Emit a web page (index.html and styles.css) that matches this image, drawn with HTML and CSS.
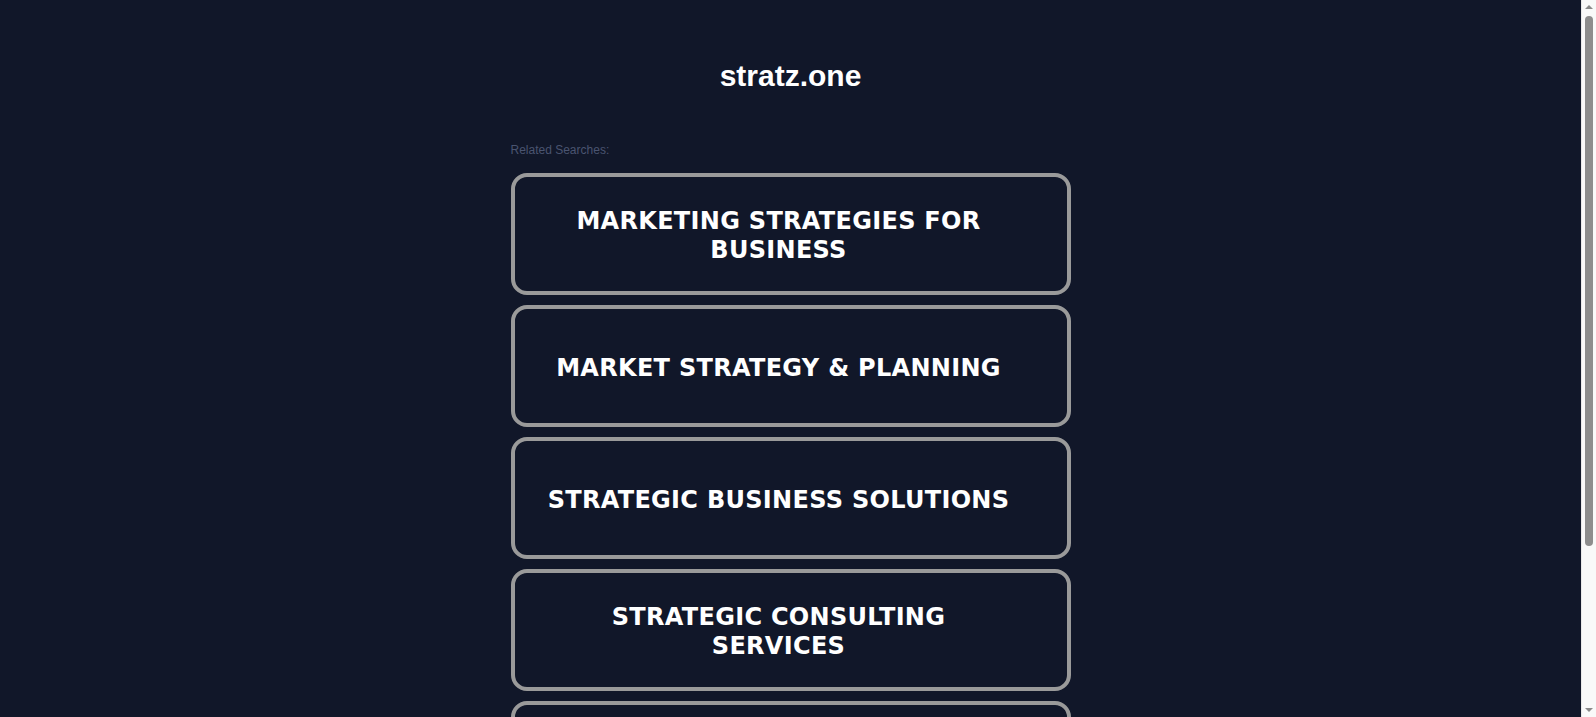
FILE: index.html
```html
<!DOCTYPE html>
<html lang="en">
<head>
<meta charset="utf-8">
<title>stratz.one</title>
<link rel="stylesheet" href="styles.css">
</head>
<body>
<div class="page">
  <header class="site-header">
    <h1 class="site-title">stratz.one</h1>
  </header>
  <main class="searches">
    <p class="searches-label">Related Searches:</p>
    <ul class="search-list">
      <li><a class="search-card" href="#"><span class="search-text">MARKETING STRATEGIES FOR BUSINESS</span></a></li>
      <li><a class="search-card" href="#"><span class="search-text">MARKET STRATEGY &amp; PLANNING</span></a></li>
      <li><a class="search-card" href="#"><span class="search-text">STRATEGIC BUSINESS SOLUTIONS</span></a></li>
      <li><a class="search-card" href="#"><span class="search-text">STRATEGIC CONSULTING SERVICES</span></a></li>
      <li><a class="search-card" href="#"><span class="search-text">BUSINESS GROWTH STRATEGIES</span></a></li>
    </ul>
  </main>
</div>
<div class="scrollbar" aria-hidden="true">
  <span class="scroll-arrow scroll-arrow-up"></span>
  <span class="scroll-track"><span class="scroll-thumb"></span></span>
  <span class="scroll-arrow scroll-arrow-down"></span>
</div>
</body>
</html>
```

FILE: styles.css
```css
html, body {
  margin: 0;
  padding: 0;
  background: #111729;
}

body {
  padding-right: 15px;
  font-family: "Liberation Sans", Arial, sans-serif;
  color: #ffffff;
}

.page {
  width: 560px;
  margin: 0 auto;
  padding: 59px 0 90px;
}

.site-header {
  text-align: center;
}

.site-title {
  margin: 0;
  font-size: 30px;
  line-height: 34px;
  font-weight: bold;
  color: #ffffff;
}

.searches {
  margin-top: 49px;
}

.searches-label {
  margin: 0 0 15px;
  font-size: 12px;
  line-height: 16px;
  color: #4a5470;
}

.search-list {
  list-style: none;
  margin: 0;
  padding: 0;
  display: flex;
  flex-direction: column;
  gap: 10px;
}

.search-card {
  box-sizing: border-box;
  height: 122px;
  display: flex;
  align-items: center;
  justify-content: center;
  padding: 4px 54px 0 30px;
  border: 4px solid #9a9a9a;
  border-radius: 16px;
  text-decoration: none;
  color: #ffffff;
}

.search-text {
  font-family: "DejaVu Sans", Verdana, sans-serif;
  font-weight: bold;
  font-size: 24px;
  line-height: 28.6px;
  letter-spacing: 0.3px;
  text-align: center;
}

.scrollbar {
  position: fixed;
  top: 0;
  right: 0;
  bottom: 0;
  width: 15px;
  background: #f9f9f9;
  border-left: 1px solid #e8e8e8;
  box-sizing: border-box;
  display: flex;
  flex-direction: column;
  align-items: center;
}

.scroll-arrow {
  flex: 0 0 14px;
  display: flex;
  align-items: center;
  justify-content: center;
}

.scroll-arrow-up::before,
.scroll-arrow-down::before {
  content: "";
  display: block;
  width: 0;
  height: 0;
  border-left: 4px solid transparent;
  border-right: 4px solid transparent;
}

.scroll-arrow-up::before {
  border-bottom: 4px solid #8a8a8a;
}

.scroll-arrow-down::before {
  border-top: 4px solid #8a8a8a;
}

.scroll-track {
  flex: 1 1 auto;
  width: 100%;
  display: flex;
  flex-direction: column;
  align-items: center;
  padding-top: 2px;
}

.scroll-thumb {
  width: 8px;
  height: 530px;
  border-radius: 4px;
  background: #8d8d8d;
}
```
